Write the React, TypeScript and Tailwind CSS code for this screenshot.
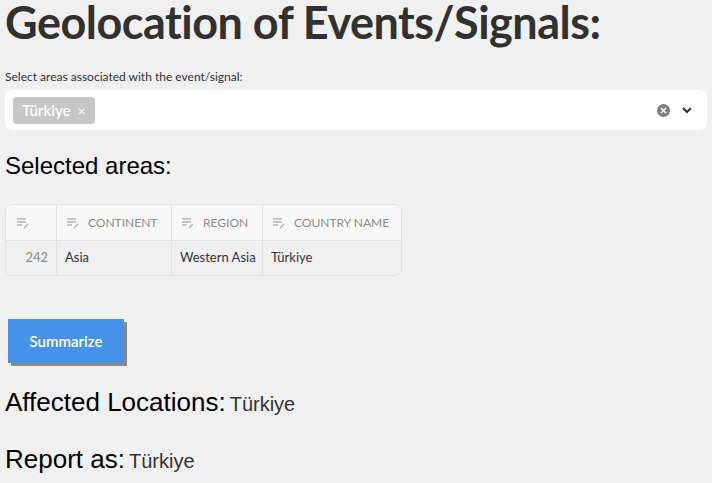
import React from 'react';

const EditIcon = () => (
  <svg width="14" height="12" viewBox="0 0 14 12" className="shrink-0">
    <path d="M1 2h9M1 5h9M1 8h5" stroke="#b5b5b5" strokeWidth="1.4" />
    <path d="M8 11l4-4" stroke="#b5b5b5" strokeWidth="1.6" />
  </svg>
);

const App = () => {
  const sans = { fontFamily: '"Lato", "Noto Sans", sans-serif' };
  const arial = { fontFamily: '"Liberation Sans", Arial, sans-serif' };
  return (
    <div className="min-h-screen w-[712px] h-[483px] overflow-hidden bg-[#f0f0f0] px-[5px]" style={sans}>
      <h1 className="text-[45px] leading-[44px] font-bold text-[#31312f] tracking-[-0.5px]">
        Geolocation of Events/Signals:
      </h1>

      <p className="mt-[25px] text-[12px] leading-[16px] text-[#31333f]">
        Select areas associated with the event/signal:
      </p>

      <div className="mt-[5px] h-[40px] bg-white rounded-[8px] flex items-center pl-[8px] pr-[14px]">
        <span className="h-[27px] bg-[#c6c6c6] rounded-[4px] text-white text-[15px] font-semibold flex items-center px-[9px] gap-[7px]">
          Türkiye <span className="text-[14px] font-normal">×</span>
        </span>
        <div className="flex-1" />
        <span className="w-[13px] h-[13px] rounded-full bg-[#7c7c85] text-white flex items-center justify-center">
          <svg width="7" height="7" viewBox="0 0 7 7"><path d="M1 1l5 5M6 1l-5 5" stroke="white" strokeWidth="1.5" /></svg>
        </span>
        <svg width="12" height="8" viewBox="0 0 12 8" className="ml-[11px]"><path d="M2 2l4 4 4-4" stroke="#31333f" strokeWidth="2" fill="none" /></svg>
      </div>

      <h2 className="mt-[22px] text-[24px] leading-[28px] text-black" style={arial}>
        Selected areas:
      </h2>

      <div className="mt-[24px] w-[397px] border border-[#e2e2e2] rounded-[7px] overflow-hidden text-[13px]">
        <div className="flex h-[36px] bg-[#f8f8f8] border-b border-[#e2e2e2] text-[#8c8c8c] text-[12px] items-center">
          <div className="w-[51px] h-full border-r border-[#e2e2e2] flex items-center pl-[10px]"><EditIcon /></div>
          <div className="w-[115px] h-full border-r border-[#e2e2e2] flex items-center pl-[9px] gap-[8px]"><EditIcon />CONTINENT</div>
          <div className="w-[91px] h-full border-r border-[#e2e2e2] flex items-center pl-[9px] gap-[8px]"><EditIcon />REGION</div>
          <div className="flex-1 h-full flex items-center pl-[9px] gap-[8px]"><EditIcon />COUNTRY NAME</div>
        </div>
        <div className="flex h-[34px] items-center text-[#31333f]">
          <div className="w-[51px] h-full border-r border-[#e2e2e2] flex items-center justify-end pr-[8px] text-[#8c8c8c]">242</div>
          <div className="w-[115px] h-full border-r border-[#e2e2e2] flex items-center pl-[8px]">Asia</div>
          <div className="w-[91px] h-full border-r border-[#e2e2e2] flex items-center pl-[8px]">Western Asia</div>
          <div className="flex-1 h-full flex items-center pl-[8px]">Türkiye</div>
        </div>
      </div>

      <button className="mt-[43px] ml-[3px] w-[116px] h-[44px] bg-[#4592e8] text-white text-[15px] font-semibold shadow-[3px_3px_0_#8a8a8a]">
        Summarize
      </button>

      <div className="mt-[20px] flex items-baseline gap-[4px]" style={arial}>
        <span className="text-[26px] text-black">Affected Locations:</span>
        <span className="text-[20px] text-[#333]">Türkiye</span>
      </div>

      <div className="mt-[18px] flex items-baseline gap-[4px]" style={arial}>
        <span className="text-[26px] text-black">Report as:</span>
        <span className="text-[20px] text-[#333]">Türkiye</span>
      </div>
    </div>
  );
};

export default App;
